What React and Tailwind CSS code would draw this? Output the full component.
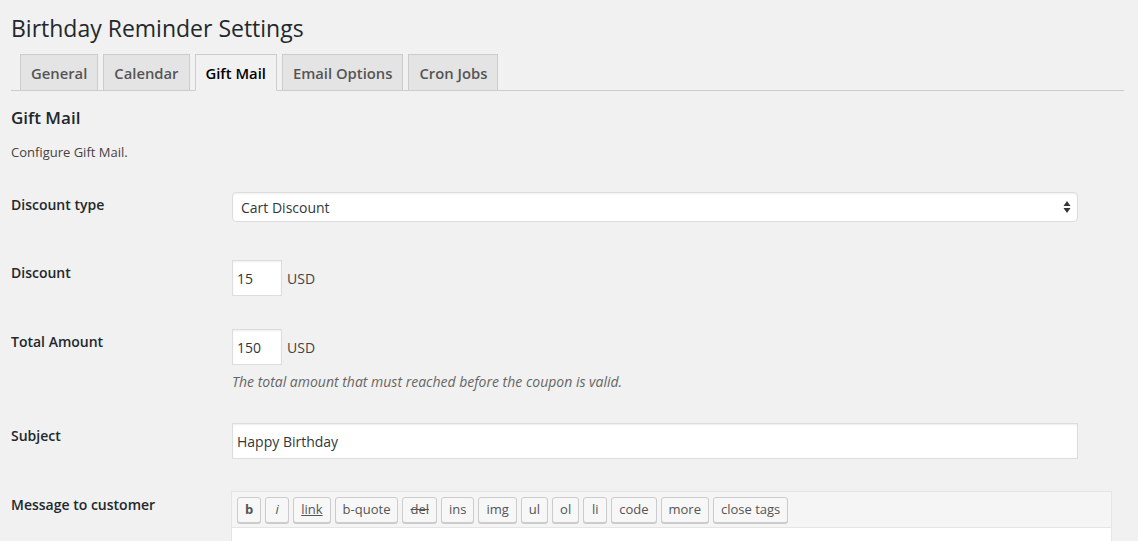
import React from "react";

const tabs = ["General", "Calendar", "Gift Mail", "Email Options", "Cron Jobs"];

const tags = [
  { label: "b", cls: "font-bold" },
  { label: "i", cls: "italic" },
  { label: "link", cls: "underline" },
  { label: "b-quote", cls: "" },
  { label: "del", cls: "line-through" },
  { label: "ins", cls: "" },
  { label: "img", cls: "" },
  { label: "ul", cls: "" },
  { label: "ol", cls: "" },
  { label: "li", cls: "" },
  { label: "code", cls: "" },
  { label: "more", cls: "" },
  { label: "close tags", cls: "" },
];

const Label = ({ children, pt }) => (
  <div className={`w-[221px] shrink-0 text-[14px] font-semibold leading-[18px] text-[#23282d] ${pt}`}>
    {children}
  </div>
);

export default function App() {
  return (
    <div
      className="min-h-screen bg-[#f1f1f1] text-[#444] pl-[11px] pr-[14px] overflow-hidden"
      style={{ fontFamily: '"Open Sans", "Liberation Sans", sans-serif' }}
    >
      <h1 className="pt-[13px] h-[54px] text-[23px] leading-[30px] font-normal text-[#23282d]">
        Birthday Reminder Settings
      </h1>

      <div className="flex items-end border-b border-[#ccc] h-[37px] pl-[9px] gap-[5px]">
        {tabs.map((t) => {
          const active = t === "Gift Mail";
          return (
            <div
              key={t}
              className={`h-[37px] -mb-px px-[10px] pt-px flex items-center border text-[14.8px] font-semibold ${
                active
                  ? "bg-[#f1f1f1] border-[#ccc] border-b-[#f1f1f1] text-black"
                  : "bg-[#e4e4e4] border-[#ccc] text-[#555]"
              }`}
            >
              {t}
            </div>
          );
        })}
      </div>

      <h2 className="pt-[16px] text-[17px] leading-[22px] font-semibold text-[#23282d]">Gift Mail</h2>
      <p className="mt-[14px] text-[13px] leading-[18px] text-[#444]">Configure Gift Mail.</p>

      {/* Discount type */}
      <div className="flex mt-[16px]">
        <Label pt="pt-[19px]">Discount type</Label>
        <div className="pt-[15px] pb-[23px]">
          <div className="w-[846px] h-[30px] bg-white border border-[#ddd] rounded-[4px] shadow-[inset_0_1px_2px_rgba(0,0,0,0.07)] flex items-center justify-between pl-[8px] pr-[6px] text-[14px] text-[#32373c]">
            <span>Cart Discount</span>
            <svg width="8" height="14" viewBox="0 0 8 14">
              <path d="M4 1 L7.5 6 H0.5 Z" fill="#32373c" />
              <path d="M4 13 L7.5 8 H0.5 Z" fill="#32373c" />
            </svg>
          </div>
        </div>
      </div>

      {/* Discount */}
      <div className="flex">
        <Label pt="pt-[19px]">Discount</Label>
        <div className="pt-[15px] pb-[18px] flex items-center gap-[5px]">
          <div className="w-[50px] h-[36px] bg-white border border-[#ddd] shadow-[inset_0_1px_2px_rgba(0,0,0,0.07)] flex items-center pl-[4px] text-[14px] text-[#32373c]">
            15
          </div>
          <span className="text-[14px] text-[#444]">USD</span>
        </div>
      </div>

      {/* Total Amount */}
      <div className="flex">
        <Label pt="pt-[19px]">Total Amount</Label>
        <div className="pt-[15px] pb-[16px]">
          <div className="flex items-center gap-[5px]">
            <div className="w-[50px] h-[36px] bg-white border border-[#ddd] shadow-[inset_0_1px_2px_rgba(0,0,0,0.07)] flex items-center pl-[4px] text-[14px] text-[#32373c]">
              150
            </div>
            <span className="text-[14px] text-[#444]">USD</span>
          </div>
          <p className="mt-[7px] text-[14px] leading-[20px] italic text-[#666]">
            The total amount that must reached before the coupon is valid.
          </p>
        </div>
      </div>

      {/* Subject */}
      <div className="flex">
        <Label pt="pt-[19px]">Subject</Label>
        <div className="pt-[15px] pb-[17px]">
          <div className="w-[846px] h-[36px] bg-white border border-[#ddd] shadow-[inset_0_1px_2px_rgba(0,0,0,0.07)] flex items-center pl-[4px] text-[14px] text-[#32373c]">
            Happy Birthday
          </div>
        </div>
      </div>

      {/* Message */}
      <div className="flex">
        <Label pt="pt-[20px]">Message to customer</Label>
        <div className="pt-[15px] -ml-px">
          <div className="w-[881px] border border-[#e5e5e5]">
            <div className="bg-[#f5f5f5] border-b border-[#e5e5e5] h-[36px] flex items-start pt-[5px] pl-[5px] gap-[4px]">
              {tags.map((t) => (
                <div
                  key={t.label}
                  className={`h-[26px] min-w-[24px] px-[7px] flex items-center justify-center bg-[#f7f7f7] border border-[#ccc] rounded-[3px] shadow-[0_1px_0_#ccc] text-[13px] text-[#555] ${t.cls}`}
                >
                  {t.label}
                </div>
              ))}
            </div>
            <div className="bg-white h-[200px] px-[10px] pt-[9px] text-[14px] text-[#333]">
              Happy birthday {"{first_name}"}! Here is a gift coupon for your next order.
            </div>
          </div>
        </div>
      </div>
    </div>
  );
}
